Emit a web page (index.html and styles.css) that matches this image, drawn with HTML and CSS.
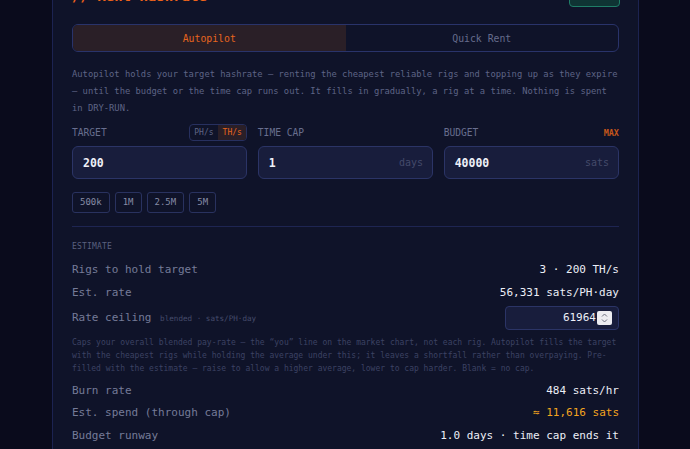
FILE: index.html
```html
<!DOCTYPE html>
<html lang="en">
<head>
<meta charset="utf-8">
<title>Rent Hashrate</title>
<link rel="stylesheet" href="styles.css">
</head>
<body>
<section class="panel">
  <header class="head">
    <h2 class="title">// Rent Hashrate</h2>
    <button class="head-btn" type="button"></button>
  </header>

  <div class="tabs">
    <div class="tab tab-active">Autopilot</div>
    <div class="tab">Quick Rent</div>
  </div>

  <p class="desc">Autopilot holds your target hashrate — renting the cheapest reliable rigs and topping up as they expire — until the budget or the time cap runs out. It fills in gradually, a rig at a time. Nothing is spent in DRY-RUN.</p>

  <div class="fields">
    <div class="field">
      <div class="label-row">
        <span class="label">TARGET</span>
        <span class="unit-toggle"><span class="unit">PH/s</span><span class="unit unit-active">TH/s</span></span>
      </div>
      <div class="input"><span class="val">200</span></div>
    </div>
    <div class="field">
      <div class="label-row">
        <span class="label">TIME CAP</span>
      </div>
      <div class="input"><span class="val">1</span><span class="suffix">days</span></div>
    </div>
    <div class="field">
      <div class="label-row">
        <span class="label">BUDGET</span>
        <span class="max">MAX</span>
      </div>
      <div class="input"><span class="val">40000</span><span class="suffix">sats</span></div>
    </div>
  </div>

  <div class="presets">
    <span class="preset">500k</span>
    <span class="preset">1M</span>
    <span class="preset">2.5M</span>
    <span class="preset">5M</span>
  </div>

  <hr class="divider">

  <div class="est-label">ESTIMATE</div>

  <div class="rows">
    <div class="row"><span class="k">Rigs to hold target</span><span class="v">3 · 200 TH/s</span></div>
    <div class="row"><span class="k">Est. rate</span><span class="v">56,331 sats/PH·day</span></div>
    <div class="row row-ceil">
      <span class="k">Rate ceiling <span class="k-sub">blended · sats/PH·day</span></span>
      <span class="ceil-input"><span class="ceil-val">61964</span><span class="spin"><svg width="9" height="12" viewBox="0 0 9 12"><path d="M2 4.5 L4.5 2 L7 4.5" fill="none" stroke="#6d7080" stroke-width="1"/><path d="M2 7.5 L4.5 10 L7 7.5" fill="none" stroke="#6d7080" stroke-width="1"/></svg></span></span>
    </div>
    <p class="caption">Caps your overall blended pay-rate — the “you” line on the market chart, not each rig. Autopilot fills the target with the cheapest rigs while holding the average under this; it leaves a shortfall rather than overpaying. Pre-filled with the estimate — raise to allow a higher average, lower to cap harder. Blank = no cap.</p>
    <div class="row"><span class="k">Burn rate</span><span class="v">484 sats/hr</span></div>
    <div class="row"><span class="k">Est. spend (through cap)</span><span class="v v-amber">≈ 11,616 sats</span></div>
    <div class="row"><span class="k">Budget runway</span><span class="v">1.0 days · time cap ends it</span></div>
  </div>
</section>
</body>
</html>
```

FILE: styles.css
```css
* { box-sizing: border-box; }

html, body {
  margin: 0;
  padding: 0;
  background: #0a0b1c;
  overflow: hidden;
  height: 449px;
}

body {
  font-family: "DejaVu Sans Mono", "Liberation Mono", monospace;
  color: #e8eaf2;
}

.panel {
  width: 587px;
  margin: -24px 0 0 52px;
  padding: 0 19px 20px;
  background: #0f1329;
  border: 1px solid #1c2351;
  min-height: 500px;
}

.head {
  height: 30px;
  display: flex;
  justify-content: space-between;
  align-items: flex-end;
}

.title {
  margin: 0 0 3px;
  font-size: 14px;
  line-height: 16px;
  font-weight: bold;
  color: #f0631b;
}

.head-btn {
  width: 51px;
  height: 26px;
  margin-right: -1px;
  background: #0f3434;
  border: 1px solid #1f7d67;
  border-radius: 4px;
  padding: 0;
}

.tabs {
  margin-top: 17px;
  height: 28px;
  display: grid;
  grid-template-columns: 1fr 1fr;
  border: 1px solid #29336a;
  border-radius: 6px;
  overflow: hidden;
}

.tab {
  display: flex;
  align-items: center;
  justify-content: center;
  font-size: 9.8px;
  color: #666c8c;
}

.tab-active {
  background: #2a1f27;
  color: #e8651e;
}

.desc {
  margin: 14px 0 0;
  font-size: 8.8px;
  line-height: 17px;
  color: #5e6486;
}

.fields {
  margin-top: 7px;
  display: grid;
  grid-template-columns: 1fr 1fr 1fr;
  column-gap: 10.5px;
}

.label-row {
  height: 17px;
  display: flex;
  justify-content: space-between;
  align-items: center;
}

.label {
  font-size: 9.6px;
  color: #686e8e;
}

.unit-toggle {
  display: flex;
  height: 17px;
  border: 1px solid #27305f;
  border-radius: 4px;
  overflow: hidden;
}

.unit {
  font-size: 8px;
  line-height: 15px;
  padding: 0 4.5px;
  color: #5f6586;
}

.unit-active {
  background: #2a1f27;
  color: #e8651e;
}

.max {
  font-size: 8.5px;
  font-weight: bold;
  color: #c4561b;
}

.input {
  margin-top: 5px;
  height: 33px;
  display: flex;
  justify-content: space-between;
  align-items: center;
  padding: 0 9px 0 10px;
  background: #181d3c;
  border: 1px solid #2b3466;
  border-radius: 6px;
}

.val {
  font-size: 11.5px;
  font-weight: bold;
  color: #eef0f8;
}

.suffix {
  font-size: 10px;
  color: #444a6a;
}

.presets {
  margin-top: 13px;
  display: flex;
  gap: 5px;
}

.preset {
  height: 21px;
  padding: 0 7px;
  font-size: 9px;
  line-height: 19px;
  color: #868ca6;
  border: 1px solid #29325f;
  border-radius: 3px;
}

.divider {
  margin: 13px 0 0;
  border: 0;
  border-top: 1px solid #1e2552;
  height: 0;
}

.est-label {
  margin-top: 14px;
  font-size: 8px;
  line-height: 12px;
  color: #5a607f;
  letter-spacing: 0.2px;
}

.rows {
  margin-top: 5.5px;
}

.row {
  height: 22.5px;
  display: flex;
  justify-content: space-between;
  align-items: center;
}

.k {
  font-size: 11px;
  color: #757b98;
}

.k-sub {
  font-size: 7.6px;
  color: #464c6c;
  margin-left: 2px;
}

.v {
  font-size: 11px;
  color: #eceef6;
}

.v-amber {
  color: #f2a41f;
}

.row-ceil {
  height: 28px;
}

.ceil-input {
  width: 114px;
  height: 24px;
  display: flex;
  justify-content: flex-end;
  align-items: center;
  padding-right: 6px;
  background: #181d3c;
  border: 1px solid #2b3466;
  border-radius: 4px;
}

.ceil-val {
  font-size: 11px;
  color: #eef0f8;
}

.spin {
  width: 15px;
  height: 14px;
  margin-left: 1px;
  display: flex;
  align-items: center;
  justify-content: center;
  background: #ececf1;
  border-radius: 2px;
}

.caption {
  margin: 4.5px 0 4px;
  font-size: 8px;
  line-height: 13px;
  color: #3c4263;
}
```
